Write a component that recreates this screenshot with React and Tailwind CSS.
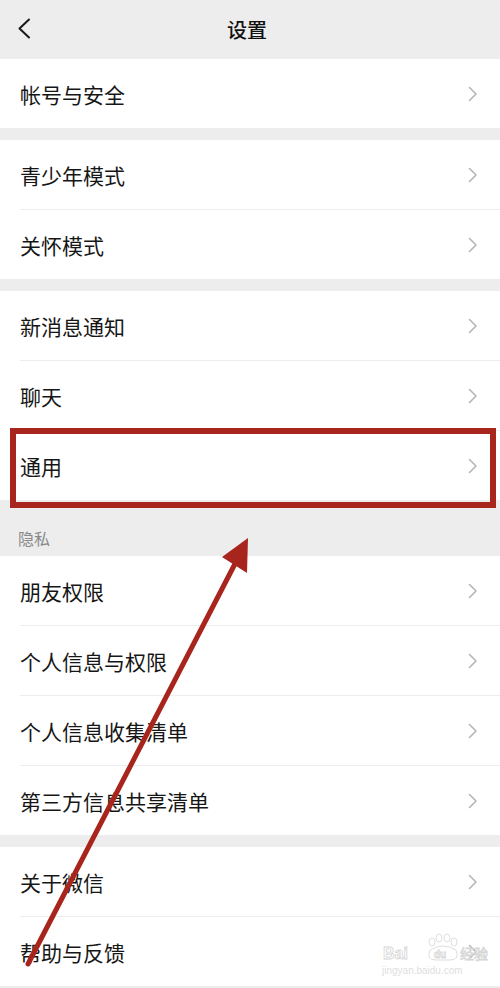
import React from "react";

const FONT = { fontFamily: '"Noto Sans CJK SC", "Noto Sans", sans-serif' };

function Chevron() {
  return (
    <svg width="10" height="16" viewBox="0 0 10 16" className="shrink-0">
      <path d="M1.5 1.5 L8 8 L1.5 14.5" fill="none" stroke="#b5b5b5" strokeWidth="1.6" strokeLinecap="round" strokeLinejoin="round" />
    </svg>
  );
}

function Row({ label }) {
  return (
    <div className="flex h-[69px] items-center justify-between bg-white pl-5 pr-[22px]">
      <span className="pt-[2px] text-[21px] leading-none text-[#161616]">{label}</span>
      <Chevron />
    </div>
  );
}

function Group({ items }) {
  return (
    <div className="flex flex-col bg-white">
      {items.map((it, i) => (
        <React.Fragment key={it}>
          {i > 0 && <div className="ml-5 h-px bg-[#ededed]" />}
          <Row label={it} />
        </React.Fragment>
      ))}
    </div>
  );
}

export default function App() {
  return (
    <div className="relative h-[988px] w-[500px] overflow-hidden bg-[#ededed]" style={FONT}>
      {/* Header */}
      <div className="relative flex h-[59px] items-center justify-center bg-[#ededed]">
        <div className="absolute left-[17px] top-[18px]">
          <svg width="14" height="21" viewBox="0 0 14 21">
            <path d="M12 1.5 L2.5 10.5 L12 19.5" fill="none" stroke="#1a1a1a" strokeWidth="2" strokeLinecap="round" strokeLinejoin="round" />
          </svg>
        </div>
        <span className="pr-[6px] text-[20px] font-medium leading-none text-[#111]">设置</span>
      </div>

      <div className="flex flex-col">
        <Group items={["帐号与安全"]} />
        <div className="h-3" />
        <Group items={["青少年模式", "关怀模式"]} />
        <div className="h-3" />
        <Group items={["新消息通知", "聊天", "通用"]} />
        <div className="flex h-[56px] items-end pb-[8px] pl-[18px]">
          <span className="text-[16px] leading-5 text-[#8a8a8a]">隐私</span>
        </div>
        <Group items={["朋友权限", "个人信息与权限", "个人信息收集清单", "第三方信息共享清单"]} />
        <div className="h-3" />
        <Group items={["关于微信", "帮助与反馈"]} />
      </div>

      {/* Red highlight box */}
      <div className="pointer-events-none absolute left-[10px] top-[428px] h-[80px] w-[486px] border-[6px] border-[#a8251d]" />

      {/* Arrow */}
      <svg className="pointer-events-none absolute left-0 top-0" width="500" height="988" viewBox="0 0 500 988">
        <line x1="28" y1="964" x2="238" y2="558" stroke="#a8251d" strokeWidth="5" strokeLinecap="round" />
        <polygon points="248,538 222,557 247,573" fill="#a8251d" />
      </svg>

      {/* Watermark */}
      <svg className="pointer-events-none absolute left-[378px] top-[928px]" width="112" height="52" viewBox="0 0 112 52">
        <g fill="#fff" stroke="#d6d6d6" strokeWidth="0.8">
          <ellipse cx="54" cy="14" rx="3" ry="4" />
          <ellipse cx="61" cy="10" rx="3" ry="4" />
          <ellipse cx="69" cy="10" rx="3" ry="4" />
          <ellipse cx="76" cy="14" rx="3" ry="4" />
          <path d="M52 22 Q65 14 78 22 Q82 32 72 32 L58 32 Q48 32 52 22 Z" />
          <text x="5" y="31" fontSize="16" fontFamily="Liberation Sans, sans-serif" fontWeight="bold">Bai</text>
          <text x="56" y="30" fontSize="10" fontFamily="Liberation Sans, sans-serif" fontWeight="bold">du</text>
          <text x="82" y="31" fontSize="14" fontFamily='"Noto Sans CJK SC", sans-serif'>经验</text>
        </g>
        <text x="4" y="46" fontSize="10" fill="#e0e0e0" fontFamily="Liberation Sans, sans-serif">jingyan.baidu.com</text>
      </svg>
    </div>
  );
}
